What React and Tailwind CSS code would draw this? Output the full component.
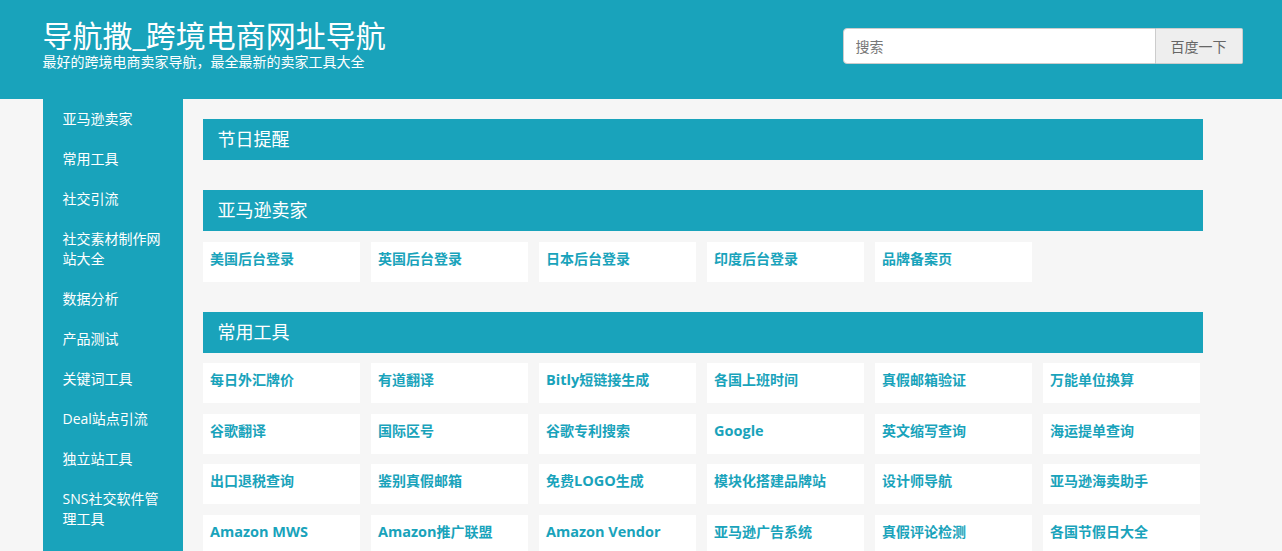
const FONT = "font-['Open_Sans','Noto_Sans_CJK_SC',sans-serif]";

const sideNav = ['亚马逊卖家', '常用工具', '社交引流', '社交素材制作网站大全', '数据分析', '产品测试', '关键词工具', 'Deal站点引流', '独立站工具', 'SNS社交软件管理工具'];

const sections = [
  { title: '节日提醒', links: [] },
  { title: '亚马逊卖家', links: ['美国后台登录', '英国后台登录', '日本后台登录', '印度后台登录', '品牌备案页'] },
  {
    title: '常用工具',
    links: [
      '每日外汇牌价', '有道翻译', 'Bitly短链接生成', '各国上班时间', '真假邮箱验证', '万能单位换算',
      '谷歌翻译', '国际区号', '谷歌专利搜索', 'Google', '英文缩写查询', '海运提单查询',
      '出口退税查询', '鉴别真假邮箱', '免费LOGO生成', '模块化搭建品牌站', '设计师导航', '亚马逊海卖助手',
      'Amazon MWS', 'Amazon推广联盟', 'Amazon Vendor', '亚马逊广告系统', '真假评论检测', '各国节假日大全',
    ],
  },
];

// latin runs sit a bit larger than the CJK around them
function LinkText({ text }) {
  return text.split(/([A-Za-z ]+)/).map((part, i) =>
    i % 2 ? <span key={i} className="text-[14.5px]">{part}</span> : part
  );
}

function Section({ title, links }) {
  return (
    <section className="mb-[30px]">
      <h2 className="h-[41px] bg-[#19a3bb] pl-[14.5px] text-[18px] leading-[41px] font-normal text-white">{title}</h2>
      {links.length > 0 && (
        <div className="mt-[10.6px] grid grid-cols-[repeat(6,157px)] gap-x-[11px] gap-y-[10.6px]">
          {links.map((link) => (
            <a key={link} href="#" className="h-10 truncate bg-white pl-[7px] text-[14px] leading-[33px] font-bold text-[#19a3bb]">
              <LinkText text={link} />
            </a>
          ))}
        </div>
      )}
    </section>
  );
}

export default function App() {
  return (
    <div className={`h-[551px] overflow-hidden bg-[#f6f6f6] ${FONT}`}>
      <header className="flex h-[99px] items-start justify-between bg-[#19a3bb] pr-[39px] pl-[43px]">
        <div className="pt-[16px] text-white">
          <h1 className="-ml-[0.5px] text-[30px] leading-[40px] font-normal">导航撒_跨境电商网址导航</h1>
          <p className="-mt-[3px] -ml-[0.5px] text-[14px] leading-[17px]">最好的跨境电商卖家导航，最全最新的卖家工具大全</p>
        </div>
        <form className="mt-[28px] flex h-[36px] w-[400px] text-[14px] text-[#666]">
          <input
            placeholder="搜索"
            className="h-full w-[313px] rounded-l-[4px] border border-[#ccc] bg-white pr-3 pl-[11.5px] outline-none placeholder:text-[#777]"
          />
          <button type="button" className="h-full flex-1 rounded-r-[2px] border border-l-0 border-[#ccc] bg-[#eee] pr-[1px]">
            百度一下
          </button>
        </form>
      </header>
      <div className="flex items-start pl-[43px]">
        <nav className="min-h-[452px] w-[140px] shrink-0 bg-[#19a3bb] pr-5 pl-[19.5px] text-[14px] leading-5 text-white">
          {sideNav.map((item) => (
            <a key={item} href="#" className="block py-[10px]">{item}</a>
          ))}
        </nav>
        <main className="ml-5 w-[1000px] pt-5">
          {sections.map((section) => (
            <Section key={section.title} {...section} />
          ))}
        </main>
      </div>
    </div>
  );
}
